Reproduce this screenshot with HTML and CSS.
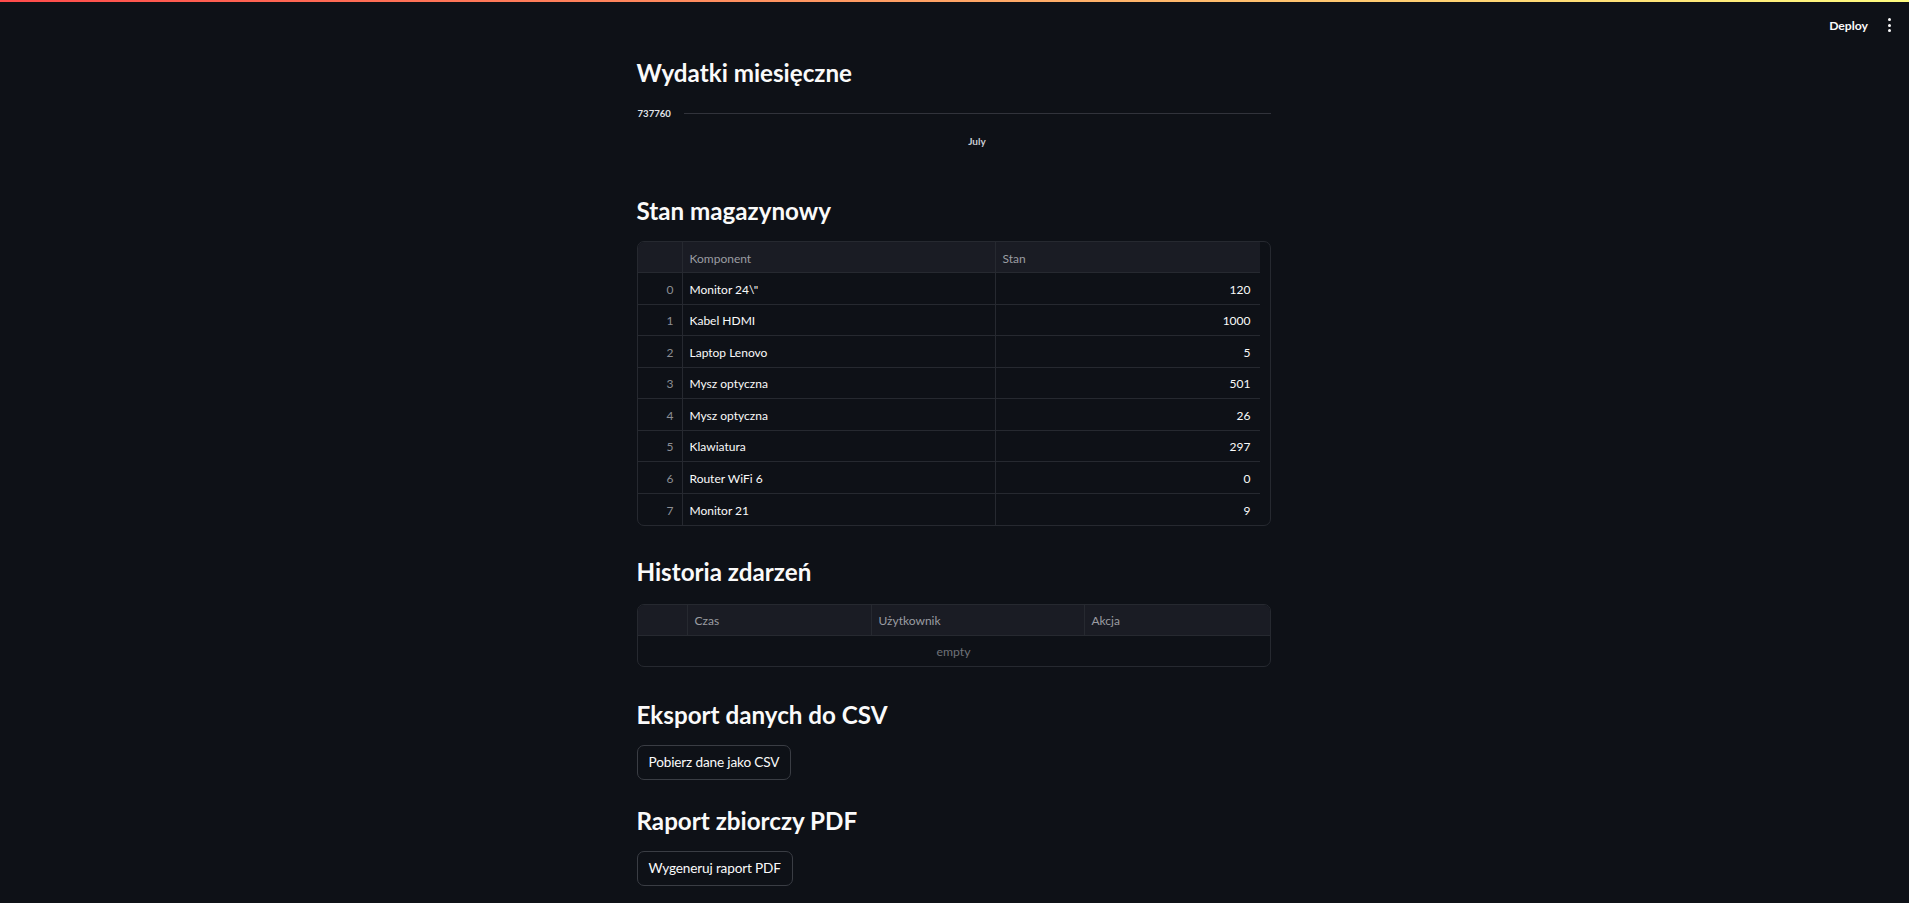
FILE: index.html
```html
<!DOCTYPE html>
<html lang="pl">
<head>
<meta charset="utf-8">
<title>Magazyn</title>
<link rel="stylesheet" href="styles.css">
</head>
<body>
<div class="topline"></div>
<header class="header">
  <span class="deploy">Deploy</span>
  <span class="kebab"><i></i><i></i><i></i></span>
</header>
<main class="main">
  <h3 class="h3 first">Wydatki miesięczne</h3>
  <div class="chart">
    <div class="axis-row">
      <span class="ylabel">737760</span>
      <span class="gridline"></span>
    </div>
    <div class="xlabel">July</div>
  </div>

  <h3 class="h3 h-stan">Stan magazynowy</h3>
  <div class="grid grid-stan">
    <div class="row head">
      <div class="cell idx"></div>
      <div class="cell">Komponent</div>
      <div class="cell">Stan</div>
    </div>
    <div class="row"><div class="cell idx">0</div><div class="cell">Monitor 24\"</div><div class="cell num">120</div></div>
    <div class="row"><div class="cell idx">1</div><div class="cell">Kabel HDMI</div><div class="cell num">1000</div></div>
    <div class="row"><div class="cell idx">2</div><div class="cell">Laptop Lenovo</div><div class="cell num">5</div></div>
    <div class="row"><div class="cell idx">3</div><div class="cell">Mysz optyczna</div><div class="cell num">501</div></div>
    <div class="row"><div class="cell idx">4</div><div class="cell">Mysz optyczna</div><div class="cell num">26</div></div>
    <div class="row"><div class="cell idx">5</div><div class="cell">Klawiatura</div><div class="cell num">297</div></div>
    <div class="row"><div class="cell idx">6</div><div class="cell">Router WiFi 6</div><div class="cell num">0</div></div>
    <div class="row last"><div class="cell idx">7</div><div class="cell">Monitor 21</div><div class="cell num">9</div></div>
  </div>

  <h3 class="h3 h-hist">Historia zdarzeń</h3>
  <div class="grid grid-hist">
    <div class="row head">
      <div class="cell idx"></div>
      <div class="cell">Czas</div>
      <div class="cell">Użytkownik</div>
      <div class="cell">Akcja</div>
    </div>
    <div class="empty">empty</div>
  </div>

  <h3 class="h3 h-csv">Eksport danych do CSV</h3>
  <button class="btn">Pobierz dane jako CSV</button>

  <h3 class="h3 h-pdf">Raport zbiorczy PDF</h3>
  <button class="btn">Wygeneruj raport PDF</button>
</main>
</body>
</html>
```

FILE: styles.css
```css
* { box-sizing: border-box; }
html, body {
  margin: 0;
  padding: 0;
  background: #0e1117;
  color: #fafafa;
  font-family: Lato, "Noto Sans", sans-serif;
  height: 100%;
  overflow: hidden;
}
.topline {
  position: absolute;
  top: 0; left: 0; right: 0;
  height: 2px;
  background: linear-gradient(90deg, #ff4b4b, #fffd80);
}
.header {
  position: absolute;
  top: 2px; right: 0;
  height: 46px;
  display: flex;
  align-items: center;
  gap: 18px;
  padding-right: 16px;
}
.deploy {
  font-size: 12.2px;
  font-weight: 700;
  color: #fafafa;
}
.kebab {
  display: flex;
  flex-direction: column;
  gap: 2.5px;
  padding: 4px 2px;
}
.kebab i {
  display: block;
  width: 3px;
  height: 3px;
  border-radius: 50%;
  background: #fafafa;
}
.main {
  width: 634px;
  margin: 0 auto;
  padding-top: 58px;
  display: flex;
  flex-direction: column;
  align-items: flex-start;
  position: relative;
  left: -1px;
}
.h3 {
  margin: 0;
  height: 30px;
  line-height: 30px;
  font-size: 24.2px;
  font-weight: 700;
  color: #fafafa;
}
.chart {
  margin-top: 14px;
  width: 100%;
  height: 50px;
  display: flex;
  flex-direction: column;
}
.axis-row {
  height: 22px;
  display: flex;
  align-items: center;
}
.ylabel {
  width: 47px;
  font-size: 9.6px;
  font-weight: 700;
  color: #e0e3e8;
  padding-left: 1px;
}
.gridline {
  flex: 1;
  height: 1px;
  background: #31333b;
}
.xlabel {
  height: 28px;
  line-height: 34px;
  padding-left: 47px;
  text-align: center;
  font-size: 10px;
  font-weight: 700;
  color: #c9ccd3;
}
.h-stan { margin-top: 44px; }
.h-hist { margin-top: 31px; }
.h-csv { margin-top: 33px; }
.h-pdf { margin-top: 26px; }
.grid {
  width: 100%;
  border: 1px solid #262930;
  border-radius: 7px;
  overflow: hidden;
  font-size: 12px;
}
.grid-stan { margin-top: 15px; }
.grid-hist { margin-top: 17px; }
.grid-stan .row {
  display: grid;
  grid-template-columns: 44px 313px 264px;
  height: 31.5px;
  border-bottom: 1px solid #262930;
  width: 622px;
}
.grid-stan .row.head { height: 31px; }
.grid-stan .row.last { border-bottom: none; height: 31px; }
.grid-hist .row {
  display: grid;
  grid-template-columns: 49px 184px 213px 1fr;
  height: 31px;
  border-bottom: 1px solid #262930;
}
.row.head {
  background: #1a1c24;
  color: #9a9ca2;
}
.cell {
  display: flex;
  align-items: center;
  padding: 2px 7px 0 7px;
  border-left: 1px solid #262930;
  white-space: nowrap;
}
.cell.idx {
  border-left: none;
  justify-content: flex-end;
  color: #8c8e94;
  padding-right: 8px;
}
.cell.num { justify-content: flex-end; padding-right: 8px; }
.empty {
  height: 30px;
  padding-top: 2px;
  display: flex;
  align-items: center;
  justify-content: center;
  color: #6f7177;
  font-size: 12.2px;
}
.btn {
  margin-top: 15px;
  height: 35px;
  padding: 0 11px;
  background: #0e1117;
  color: #fafafa;
  border: 1px solid #3a3d44;
  border-radius: 7px;
  font-family: Lato, "Noto Sans", sans-serif;
  font-size: 13.6px;
  letter-spacing: -0.15px;
}
```
